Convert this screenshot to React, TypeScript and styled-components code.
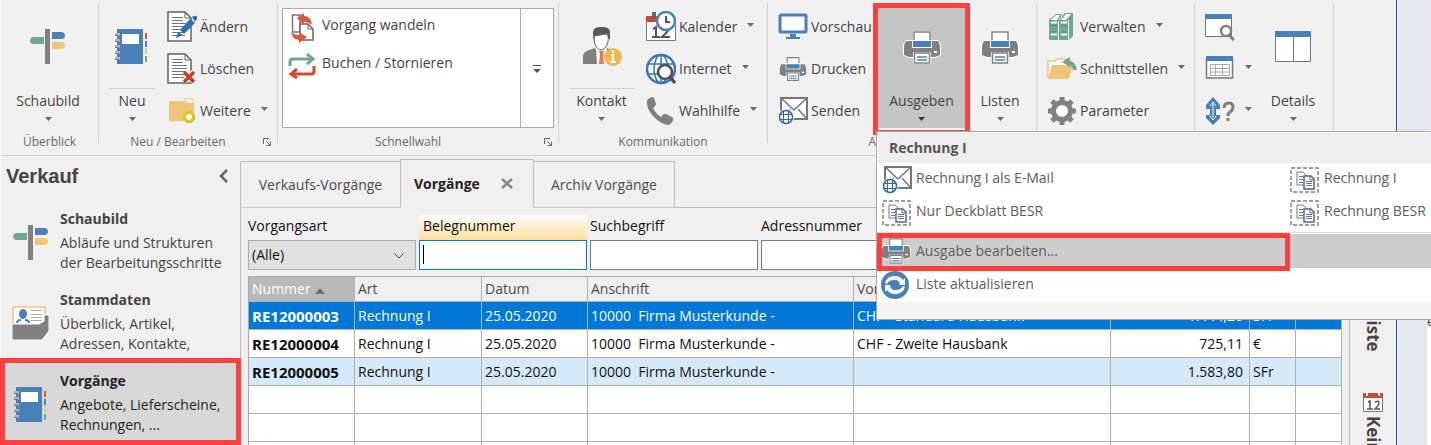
import React from 'react';
import styled, { createGlobalStyle } from 'styled-components';

const red = '#ff4040';
const blue = '#4a80b8';
const grey = '#808080';
const green = '#72a694';
const yellow = '#efc679';

const GlobalStyle = createGlobalStyle`
  * { box-sizing: border-box; }
  body {
    margin: 0;
    overflow: hidden;
    background: #f0f0f0;
    color: #444;
    font: 14px/20px "Open Sans", "Noto Sans", sans-serif;
  }
  button, input, select { font: inherit; color: inherit; }
  button { border: 0; padding: 0; background: none; text-align: left; }
  svg { display: block; flex: none; }
`;

/* ---------- icons ---------- */

type IconProps = { w: number; h: number; children: React.ReactNode };
const Icon = ({ w, h, children }: IconProps) => (
  <svg width={w} height={h} viewBox={`0 0 ${w} ${h}`} fill="none" aria-hidden="true">
    {children}
  </svg>
);

const SignIcon = () => (
  <Icon w={36} h={36}>
    <path d="M15 0h5v35h-5z" fill={grey} />
    <path d="M14 8H4q-4 0-4 3.500T4 15h10z" fill={green} />
    <path d="M22 3h9q4 0 4 3.500T31 10h-9z" fill={blue} />
    <path d="M22 13h9q4 0 4 3.500T31 20h-9z" fill={yellow} />
  </Icon>
);

const NotebookIcon = () => (
  <Icon w={34} h={36}>
    <path d="M2 0h26v35H2z" fill={blue} />
    <path d="M7 5h17v10H7z" fill="#fff" />
    <path d="M0 4h5v3H0zM0 10h5v3H0zM0 16h5v3H0zM0 22h5v3H0zM0 28h5v3H0z" fill="#aeb6bd" />
    <path d="M0 6h4v1H0zM0 12h4v1H0zM0 18h4v1H0zM0 24h4v1H0zM0 30h4v1H0z" fill="#777" />
    <path d="M30 4h2v6h-2z" fill="#d9593b" />
    <path d="M30 12h2v6h-2z" fill={blue} />
    <path d="M30 19h2v6h-2z" fill={yellow} />
    <path d="M30 27h2v6h-2z" fill={green} />
  </Icon>
);

const DocBase = () => (
  <>
    <path d="M1 1h17l6 6v23H1z" fill="#fff" stroke="#606060" strokeWidth="1.500" />
    <path d="M18 1v6h6" stroke="#606060" />
    <path d="M5 6.500h11M5 9.500h11M5 12.500h15M5 15.500h15M5 18.500h15M5 21.500h13M5 24.500h13" stroke="#777" />
  </>
);

const EditIcon = () => (
  <Icon w={30} h={32}>
    <DocBase />
    <path d="M13 19 23 8l5 4-11 11zM25 6l2-1q2-1 3 1t-1 3l-1 2zM11 21l5 3-7 3z" fill="#2f6db3" />
  </Icon>
);

const DeleteIcon = () => (
  <Icon w={30} h={32}>
    <DocBase />
    <path d="m18 19 9 9m0-9-9 9" stroke="#fff" strokeWidth="6" />
    <path d="m17 19 10 10m0-10L17 29" stroke="#cb3d23" strokeWidth="3.500" />
  </Icon>
);

const FolderPlusIcon = () => (
  <Icon w={30} h={28}>
    <path d="M18 4V2h8v6z" fill="#fff" stroke={yellow} />
    <path d="M2 4h14l3 2h8v18H2z" fill={yellow} />
    <circle cx="22" cy="20" r="6" fill="#d6c91f" />
    <path d="M22 14v12M16 20h12" stroke="#d6c91f" strokeWidth="6" />
    <path d="M22 17v6M19 20h6" stroke="#fff" strokeWidth="3" />
  </Icon>
);

const ConvertIcon = () => (
  <Icon w={28} h={30}>
    <path d="M4.500 2v17H12V2z" fill="#fff" stroke="#777" strokeWidth="1.500" />
    <path d="M12 11h8l5 5v11H12z" fill="#fff" stroke="#666" strokeWidth="1.500" />
    <path d="M20 11v5h5" stroke="#666" />
    <path d="m9 5 7-5v3q7 0 8 9-3-3-8-3v3z" fill="#d9593b" />
    <path d="m19 24-8 6v-3q-7-1-8-8 3 3 8 3v-3z" fill="#d9593b" />
  </Icon>
);

const SwapIcon = () => (
  <Icon w={28} h={26}>
    <path d="M2 13V9q0-3 3-3h20" stroke={green} strokeWidth="3" />
    <path d="m19 1 6 5-6 5" stroke={green} strokeWidth="3" />
    <path d="M26 13v5q0 3-3 3H4" stroke="#d4482d" strokeWidth="3" />
    <path d="m9 16-6 5 6 4" stroke="#d4482d" strokeWidth="3" />
  </Icon>
);

const ContactIcon = () => (
  <Icon w={40} h={42}>
    <path d="M11 6q0-5 8-5 10-1 9 7v5H11z" fill="#585858" />
    <path d="M12 10q7-1 12-2 3 0 2 8-1 6-6 8-5 0-7-6-1-4-1-8z" fill="#fff" stroke="#666" />
    <path d="M1 38v-8q0-4 6-6l6-2 6 9 6-9 8 4v12z" fill={grey} />
    <path d="m14 22 5 4 5-4 2 4v12H15z" fill="#fff" />
    <path d="M17 25h5l-1 3 1 10h-5l1-10z" fill="#e9784d" />
    <circle cx="31" cy="31" r="9" fill="#f1b84f" />
    <path d="M31 24v3M29 29h2v7m-3 0h6" stroke="#fff" strokeWidth="2" />
  </Icon>
);

const CalendarClockIcon = () => (
  <Icon w={30} h={32}>
    <path d="M1 10h28v19H1z" fill="#fff" />
    <path d="M.5 10v19.500h29V14" stroke="#777" />
    <path d="M0 5h16v6H0z" fill="#cb4a30" />
    <path d="M6 1h4v6H6z" fill="#666" />
    <path d="m7 18 3-2v10m-4 0h8M16 18q2-3 5-1 2 3-1 5l-4 4h8" stroke="#555" strokeWidth="2" />
    <circle cx="20" cy="10" r="9" fill="#fff" stroke={blue} strokeWidth="2.500" />
    <path d="M20 5v6h4" stroke="#555" strokeWidth="2" />
  </Icon>
);

const InternetIcon = () => (
  <Icon w={30} h={32}>
    <circle cx="15" cy="16" r="14" stroke="#3a76b4" strokeWidth="2.500" fill="#f8fafc" />
    <ellipse cx="15" cy="16" rx="7" ry="14" stroke="#3a76b4" strokeWidth="1.500" />
    <path d="M15 2v28M2 11h26M2 21h26" stroke="#3a76b4" strokeWidth="1.500" />
    <circle cx="19" cy="19" r="7" fill="#f4f6f8" stroke="#505050" strokeWidth="2.500" />
    <path d="m24 24 5 6" stroke="#505050" strokeWidth="3.500" />
  </Icon>
);

const PhoneIcon = () => (
  <Icon w={30} h={30}>
    <path
      d="M1 5q0-2 3-3 3-2 4 0l2 6q0 2-3 4 3 6 8 9 3-4 5-3l6 3q2 1 1 3-1 4-5 5Q14 28 6 19 0 11 1 5z"
      fill={grey}
    />
  </Icon>
);

const MonitorIcon = () => (
  <Icon w={30} h={28}>
    <rect x="2" y="2" width="26" height="17" rx="1" fill="#fff" stroke={blue} strokeWidth="3" />
    <path d="M12 21h6v3h4v2H8v-2h4z" fill={blue} />
  </Icon>
);

const PrinterIcon = ({ w = 28, h = 26 }: { w?: number; h?: number }) => (
  <svg width={w} height={h} viewBox="0 0 38 33" fill="none" aria-hidden="true">
    <path d="M10 0h18v9h7l3 4v11l-5 3h-5v6H10v-6H5l-5-3V13l3-4h7z" fill="#fff" />
    <path d="M11 9V1h16v8" fill="#fff" stroke={grey} strokeWidth="1.500" />
    <path d="M3 10h32q2 3 2 6v8l-5 2H6l-5-2v-8q0-3 2-6z" fill={grey} />
    <path d="M9 9h20v8H9z" fill="#fff" />
    <path d="M10 10h18v6H10z" fill={blue} />
    <path d="M10 21h18v12H10z" fill="#fff" />
    <path d="M11.500 22h15v10h-15z" fill="#fff" stroke={grey} strokeWidth="1.500" />
    <path d="M14 26h10M14 29h10" stroke={blue} strokeWidth="1.500" />
    <path d="M31 20h3v2h-3z" fill="#fff" />
  </svg>
);

const MailGlobeIcon = () => (
  <Icon w={30} h={28}>
    <path d="M3 1h26v21H3z" fill="#fff" stroke="#777" strokeWidth="2" />
    <path d="m3 1 13 12L29 1M4 21l8-9m8 0 8 9" stroke="#777" strokeWidth="1.500" />
    <circle cx="8" cy="20" r="8" fill="#f4f6f8" />
    <circle cx="8" cy="20" r="6.500" fill="#fff" stroke="#2e67a3" strokeWidth="1.500" />
    <path d="M5.500 14v12M10.500 14v12M2 17.500h12M2 22.500h12" stroke="#2e67a3" />
  </Icon>
);

const BooksIcon = () => (
  <Icon w={30} h={30}>
    <path d="M2 8 9 2h6l-1 3 4-4h8v23l-4 4H3l-1-1z" fill={green} />
    <path d="M4 8 9 3h4l-3 5zM14 8l5-6h5l-5 6z" fill="#fff" />
    <path d="M11.500 9v19M21.500 8v20M12 8l3-4" stroke="#f0f5f3" />
    <path d="M4 10.500h6M4 22.500h6M14 10.500h6M14 22.500h6" stroke="#fff" strokeWidth="2" />
    <path d="M4 13.500h6M14 13.500h6M5 20h4M15 20h4" stroke="#4f8572" />
  </Icon>
);

const FolderArrowIcon = () => (
  <Icon w={30} h={26}>
    <path d="M1 22V5h7l2-2h9v4h5v5" fill="#fff" stroke={yellow} strokeWidth="1.500" />
    <path d="M5 9h21l-4 14H1z" fill={yellow} />
    <path d="M28 14q-1-7-8-8" stroke={green} strokeWidth="4" />
    <path d="m15 6 8-5v10z" fill={green} />
  </Icon>
);

const GearIcon = () => (
  <Icon w={30} h={30}>
    <circle cx="15" cy="15" r="8.500" stroke={grey} strokeWidth="5" fill="#fff" />
    <g stroke={grey} strokeWidth="5">
      <path d="M15 1v4M15 25v4M1 15h4M25 15h4" />
      <path d="m5 5 3 3M22 22l3 3M25 5l-3 3M8 22l-3 3" />
    </g>
  </Icon>
);

const WindowSearchIcon = () => (
  <Icon w={30} h={28}>
    <path d="M.5 3v20.500h26V3" fill="#fff" stroke="#777" />
    <path d="M0 1h27v5H0z" fill={blue} />
    <circle cx="21" cy="18" r="5" fill="#fff" stroke={grey} strokeWidth="2.500" />
    <path d="m24 22 5 5" stroke={grey} strokeWidth="3" />
  </Icon>
);

const WindowGridIcon = () => (
  <Icon w={30} h={28}>
    <path d="M1.500 3v20h26V3" fill="#fff" stroke="#777" strokeWidth="1.500" />
    <path d="M1 1h27v5H1z" fill={blue} />
    <path d="M5.500 9.500h19v11h-19zM5 13.500h19M5 17h19M10.500 9v12M17.500 9v12" stroke="#aaa" />
  </Icon>
);

const SortHelpIcon = () => (
  <Icon w={30} h={30}>
    <path d="m8 1 7 8v4h-4v6h4v3l-7 7-7-7v-3h4v-6H1V9z" fill={blue} />
    <path d="M8 8v13M5 10l3-4 3 4M5 20l3 4 3-4" stroke="#fff" />
    <path d="M19 12q0-5 5-5 4 0 4 4 0 3-3 5-2 1-2 4M23 22v3" stroke={grey} strokeWidth="3" />
  </Icon>
);

const DetailsIcon = () => (
  <Icon w={36} h={32}>
    <path d="M.500 3v27.500h35V3M18.500 5v25" fill="#fff" stroke="#777" />
    <path d="M0 0h36v6H0z" fill={blue} />
  </Icon>
);

const CardsIcon = () => (
  <Icon w={40} h={36}>
    <path d="M2 18V1h32v18" fill="#fff" stroke={yellow} strokeWidth="1.500" />
    <ellipse cx="12" cy="8" rx="4" ry="5" fill={blue} />
    <path d="M6 17q0-3 4-3M18 17q0-3-4-3" stroke={blue} strokeWidth="2" />
    <path d="M20 4.500h11M20 8.500h11M20 11.500h11M20 14.500h11" stroke="#aaa" />
    <path d="M1 18h27l5-3V9h5v16l-7 9H1z" fill={grey} stroke="#fff" />
  </Icon>
);

const CopyDocsIcon = () => (
  <Icon w={30} h={26}>
    <path d="M1 1h27v24H1z" stroke="#808080" strokeWidth="1.500" strokeDasharray="4 2" fill="#fff" />
    <path d="M7 5h6l3 3v10H7z" fill="#fff" stroke="#777" />
    <path d="M9 9.500h4M9 12.500h4M9 15.500h4" stroke={blue} />
    <path d="M14 9h7l3 3v10H14z" fill="#fff" stroke="#666" strokeWidth="1.500" />
    <path d="M20 9v4h4" stroke="#666" />
    <path d="M16 14.500h6M16 16.500h6M16 18.500h6" stroke={blue} />
  </Icon>
);

const RefreshIcon = () => (
  <Icon w={28} h={28}>
    <circle cx="14" cy="14" r="14" fill={blue} />
    <path d="M4 12q2-7 10-7 5 0 8 4l2-2v7h-7l2-2q-2-3-6-3-5 0-7 4z" fill="#fff" />
    <path d="M24 16q-2 7-10 7-5 0-8-4l-2 2v-7h7l-2 2q2 3 6 3 5 0 7-4z" fill="#fff" />
    <path d="M9 15q0-4 5-5l1-2 3 4-4 3z" fill={blue} />
    <path d="M19 13q0 4-5 5l-1 2-3-4 4-3z" fill={blue} />
  </Icon>
);

const SmallCalendarIcon = () => (
  <Icon w={20} h={20}>
    <path d="M.500 5v14.500h19V5" fill="#fff" stroke="#777" />
    <path d="M0 1h20v5H0z" fill="#cb4a30" />
    <path d="M4 0v4M16 0v4" stroke="#fff" strokeWidth="2" />
    <path d="m5 10 2-1v8m-3 0h6M12 10q4-2 4 1 0 2-4 6h5" stroke="#555" strokeWidth="1.500" />
  </Icon>
);

const CaretDown = ({ dark }: { dark?: boolean }) => (
  <Icon w={7} h={4}>
    <path d="M0 0h7L3.500 4z" fill={dark ? '#333' : '#6a6a6a'} />
  </Icon>
);

/* ---------- shell ---------- */

const Screen = styled.div`
  display: flex;
  height: 100vh;
  overflow: hidden;
`;

const AppWindow = styled.div`
  flex: 1;
  min-width: 0;
  display: flex;
  flex-direction: column;
  border-left: 1px solid #fafafa;
  border-right: 1px solid #2b579a;
`;

const Backdrop = styled.div`
  width: 34px;
  flex: none;
  display: flex;
  flex-direction: column;
  background: #e6eaee;
`;

const BackdropTop = styled.div`
  height: 130px;
  border-bottom: 1px solid #d4dbe2;
`;

const BackdropEdge = styled.div`
  flex: 1;
  width: 4px;
  margin-left: 30px;
  padding-top: 182px;
  background: #fff;
  color: #333;
  font-size: 12px;
`;

/* ---------- ribbon ---------- */

const Ribbon = styled.header`
  display: flex;
  flex: none;
  height: 156px;
  background: #f1f1f1;
  border-bottom: 1px solid #cfcfcf;
`;

const Group = styled.section<{ $width: number }>`
  width: ${(p) => p.$width}px;
  flex: none;
  display: flex;
  flex-direction: column;
`;

const GroupBody = styled.div<{ $inset?: number }>`
  display: flex;
  height: 132px;
  padding: 6px 0 0 ${(p) => p.$inset ?? 10}px;
`;

const GroupFooter = styled.div`
  display: flex;
  align-items: center;
  height: 20px;
  color: #6a6a6a;
  font-size: 12px;
  white-space: nowrap;
`;

const FooterLabel = styled.span`
  flex: 1;
  text-align: center;
`;

const Launcher = styled.button`
  width: 20px;
  padding-left: 6px;
`;

const Divider = styled.div`
  width: 1px;
  flex: none;
  height: 140px;
  margin-top: 3px;
  background: #d2d2d2;
`;

const BigButton = styled.button<{ $width: number; $active?: boolean }>`
  width: ${(p) => p.$width}px;
  height: 122px;
  flex: none;
  display: flex;
  flex-direction: column;
  align-items: center;
  background: ${(p) => (p.$active ? '#c5c5c5' : 'transparent')};
`;

const BigIcon = styled.span<{ $split?: boolean }>`
  display: flex;
  align-items: center;
  justify-content: center;
  align-self: stretch;
  height: 83px;
  margin-bottom: 2px;
  border-bottom: 1px solid ${(p) => (p.$split ? '#cfcfcf' : 'transparent')};
`;

const BigLabel = styled.span`
  margin-bottom: 6px;
`;

const Column = styled.div<{ $width?: number; $gap?: number }>`
  display: flex;
  flex-direction: column;
  width: ${(p) => (p.$width ? `${p.$width}px` : 'auto')};
  margin-left: ${(p) => p.$gap ?? 0}px;
`;

const RowButton = styled.button`
  display: flex;
  align-items: center;
  gap: 3px;
  height: 42px;
  white-space: nowrap;
  & > span { width: 30px; display: flex; justify-content: center; }
  & > svg { margin: 0 0 4px 7px; }
`;

const Gallery = styled.div`
  display: flex;
  width: 272px;
  height: 120px;
  margin-top: 2px;
  background: #fff;
  border: 1px solid #ababab;
`;

const GalleryList = styled.div`
  flex: 1;
  padding-left: 5px;
`;

const GalleryItem = styled.button`
  display: flex;
  align-items: center;
  gap: 6px;
  height: 38px;
  & > span { padding-bottom: 6px; }
`;

const GalleryMore = styled.button`
  width: 33px;
  display: flex;
  justify-content: center;
  padding-top: 56px;
  border-left: 1px solid #ababab;
`;

const Anchor = styled.div`
  position: relative;
`;

const RedFrame = styled.div<{ $inset: string; $fill?: string; $above?: boolean }>`
  position: absolute;
  z-index: ${(p) => (p.$above ? 1 : 'auto')};
  inset: ${(p) => p.$inset};
  border: 5px solid ${red};
  background: ${(p) => p.$fill ?? 'transparent'};
  pointer-events: none;
`;

/* ---------- output menu ---------- */

const Menu = styled.div`
  position: absolute;
  z-index: 5;
  top: 125px;
  left: 0;
  width: 560px;
  background: #fff;
  border: 1px solid #a6a6a6;
  color: #5c5c5c;
`;

const MenuTitle = styled.h2`
  margin: 1px 1px 0;
  padding: 4px 11px;
  height: 30px;
  background: #eee;
  font-size: 14px;
  line-height: 22px;
  color: #555;
`;

const MenuGrid = styled.div`
  display: grid;
  grid-template-columns: 408px 1fr;
  padding: 0 0 3px 5px;
  border-bottom: 1px solid #ddd;
`;

const MenuItem = styled.button`
  display: flex;
  align-items: center;
  gap: 4px;
  height: 33px;
  white-space: nowrap;
  & > i { width: 30px; }
  & > span { padding-bottom: 3px; }
`;

const MenuRow = styled(MenuItem)<{ $hover?: boolean }>`
  position: relative;
  width: 100%;
  height: 34px;
  margin-top: ${(p) => (p.$hover ? 1 : 0)}px;
  padding-left: 4px;
  gap: 5px;
  background: ${(p) => (p.$hover ? '#cdcdcd' : 'transparent')};
  & > span { padding-bottom: ${(p) => (p.$hover ? 1 : 2)}px; }
`;

const MenuFooter = styled.div`
  height: 17px;
  background: #f5f5f5;
`;

/* ---------- navigation ---------- */

const Body = styled.div`
  flex: 1;
  min-height: 0;
  display: flex;
`;

const Nav = styled.nav`
  width: 239px;
  flex: none;
  background: #f0f0f0;
`;

const NavHeader = styled.div`
  display: flex;
  justify-content: space-between;
  align-items: center;
  height: 47px;
  padding: 0 11px 8px 5px;
`;

const NavTitle = styled.h1`
  margin: 0;
  font: bold 20px/24px "Liberation Sans", Arial, sans-serif;
`;

const NavItem = styled.a<{ $selected?: boolean }>`
  position: relative;
  display: flex;
  height: 81px;
  padding-top: 6px;
  color: ${(p) => (p.$selected ? '#222' : '#444')};
  text-decoration: none;
  white-space: nowrap;
`;

const NavIcon = styled.span`
  position: relative;
  display: flex;
  justify-content: center;
  width: 59px;
  padding-top: 16px;
`;

const NavText = styled.span`
  position: relative;
  display: block;
  & strong { display: block; margin-bottom: 4px; }
`;

/* ---------- content ---------- */

const Content = styled.main`
  flex: 1;
  min-width: 0;
  display: flex;
  flex-direction: column;
`;

const TabBar = styled.div`
  display: flex;
  align-items: flex-end;
  height: 52px;
  flex: none;
`;

const Tab = styled.button<{ $width: number; $active?: boolean }>`
  display: flex;
  align-items: center;
  justify-content: ${(p) => (p.$active ? 'space-between' : 'center')};
  width: ${(p) => p.$width}px;
  height: ${(p) => (p.$active ? 49 : 47)}px;
  padding: 0 ${(p) => (p.$active ? 20 : 0)}px 0 ${(p) => (p.$active ? 13 : 0)}px;
  border: 1px solid #bdbdbd;
  border-right-width: ${(p) => (p.$active ? 1 : 0)}px;
  border-bottom-color: ${(p) => (p.$active ? 'transparent' : '#c8c8c8')};
  color: ${(p) => (p.$active ? '#222' : '#4c4c4c')};
  font-weight: ${(p) => (p.$active ? 700 : 400)};
  & + & + & { border-left-width: 0; border-right-width: 1px; }
`;

const TabFill = styled.div`
  flex: 1;
  height: 1px;
  background: #bdbdbd;
`;

const Sheet = styled.div`
  flex: 1;
  min-height: 0;
  padding: 7px 7px 0;
  border-left: 1px solid #bdbdbd;
`;

const Filters = styled.form`
  display: flex;
  gap: 3px;
  margin-bottom: 6px;
`;

const Field = styled.label<{ $focus?: boolean }>`
  position: relative;
  width: 168px;
  flex: none;
  color: #111;
  background: ${(p) => (p.$focus ? 'linear-gradient(#fffdf8, #fddf9f 25px)' : 'none')};
  ${(p) => p.$focus && `
    &::after {
      content: '';
      position: absolute;
      left: 4px;
      bottom: 6px;
      width: 1px;
      height: 19px;
      background: #000;
    }
  `}
`;

const FieldLabel = styled.span<{ $focus?: boolean }>`
  display: block;
  height: 25px;
  padding: 1px 0 0 ${(p) => (p.$focus ? 4 : 0)}px;
`;

const TextBox = styled.input<{ $focus?: boolean }>`
  display: block;
  width: 100%;
  height: 30px;
  padding: 0 4px;
  border: 1px solid ${(p) => (p.$focus ? '#0078d7' : '#7a7a7a')};
  border-radius: 0;
  background: #fff;
  outline: none;
`;

const DropDown = styled.select`
  display: block;
  width: 100%;
  height: 30px;
  padding: 0 3px;
  appearance: none;
  border: 1px solid #adadad;
  border-radius: 0;
  background: #e1e1e1;
`;

const DropArrow = styled.span`
  position: absolute;
  right: 12px;
  bottom: 11px;
  pointer-events: none;
`;

const Table = styled.table`
  width: 100%;
  table-layout: fixed;
  border-collapse: separate;
  border-spacing: 0;
  border: solid #a9a9a9;
  border-width: 1px 0 0 1px;
  background: #fff;
  color: #111;
`;

const Th = styled.th<{ $sorted?: boolean }>`
  height: 25px;
  padding: 0 3px;
  border: solid #b0b0b0;
  border-width: 0 1px 1px 0;
  background: ${(p) => (p.$sorted ? '#b9b9b9' : '#f0f0f0')};
  color: ${(p) => (p.$sorted ? '#fff' : '#4c4c4c')};
  font-weight: 400;
  text-align: left;
  & svg { display: inline-block; margin-left: 4px; }
`;

const Tr = styled.tr<{ $tone?: 'selected' | 'tint' }>`
  background: ${(p) => (p.$tone === 'selected' ? '#0078d7' : p.$tone === 'tint' ? '#d6e9f8' : '#fff')};
  color: ${(p) => (p.$tone === 'selected' ? '#fff' : '#111')};
`;

const Td = styled.td<{ $strong?: boolean; $right?: boolean }>`
  height: 28px;
  padding: 0 ${(p) => (p.$right ? 6 : 3)}px 0 3px;
  border: solid #b0b0b0;
  border-width: 0 1px 1px 0;
  font-size: ${(p) => (p.$strong ? 15 : 14)}px;
  font-weight: ${(p) => (p.$strong ? 700 : 400)};
  text-align: ${(p) => (p.$right ? 'right' : 'left')};
  white-space: pre;
`;

const SideTabs = styled.aside`
  width: 47px;
  flex: none;
  display: flex;
  flex-direction: column;
  align-items: center;
  border-left: 1px solid #bdbdbd;
  background: #f0f0f0;
`;

const SideTab = styled.button<{ $tall?: boolean }>`
  display: flex;
  flex-direction: column;
  align-items: center;
  justify-content: ${(p) => (p.$tall ? 'flex-end' : 'flex-start')};
  flex: none;
  gap: 4px;
  height: ${(p) => (p.$tall ? 196 : 200)}px;
  margin-bottom: 40px;
  font-size: 17px;
  font-weight: 700;
  & > span { writing-mode: vertical-rl; white-space: nowrap; }
`;

/* ---------- composed parts ---------- */

type BigProps = { icon: React.ReactNode; label: string; width: number; active?: boolean; split?: boolean };
const Big = ({ icon, label, width, active, split }: BigProps) => (
  <BigButton $width={width} $active={active}>
    <BigIcon $split={split}>{icon}</BigIcon>
    <BigLabel>{label}</BigLabel>
    <CaretDown dark={active} />
  </BigButton>
);

type RowProps = { icon: React.ReactNode; label?: string; caret?: boolean };
const Row = ({ icon, label, caret }: RowProps) => (
  <RowButton>
    <span>{icon}</span>
    {label}
    {caret && <CaretDown />}
  </RowButton>
);

const Footer = ({ label, launcher }: { label: string; launcher?: boolean }) => (
  <GroupFooter>
    <FooterLabel>{label}</FooterLabel>
    {launcher && (
      <Launcher aria-label={`${label} Optionen`}>
        <Icon w={8} h={8}>
          <path d="M.5 6V.5H6M3 3l4 4M7.500 3.500v4h-4" stroke="#666" />
        </Icon>
      </Launcher>
    )}
  </GroupFooter>
);

const navItems = [
  { title: 'Schaubild', lines: ['Abläufe und Strukturen', 'der Bearbeitungsschritte'], icon: <SignIcon /> },
  { title: 'Stammdaten', lines: ['Überblick, Artikel,', 'Adressen, Kontakte,'], icon: <CardsIcon /> },
  { title: 'Vorgänge', lines: ['Angebote, Lieferscheine,', 'Rechnungen, ...'], icon: <NotebookIcon />, selected: true },
];

const rows: { tone?: 'selected' | 'tint'; cells: string[] }[] = [
  { tone: 'selected', cells: ['RE12000003', 'Rechnung I', '25.05.2020', '10000  Firma Musterkunde -', 'CHF - Standard Hausbank', '1.444,20', 'SFr', ''] },
  { cells: ['RE12000004', 'Rechnung I', '25.05.2020', '10000  Firma Musterkunde -', 'CHF - Zweite Hausbank', '725,11', '€', ''] },
  { tone: 'tint', cells: ['RE12000005', 'Rechnung I', '25.05.2020', '10000  Firma Musterkunde -', '', '1.583,80', 'SFr', ''] },
  { cells: Array(8).fill('') },
  { cells: Array(8).fill('') },
  { cells: Array(8).fill('') },
];

const headings = ['Nummer', 'Art', 'Datum', 'Anschrift', 'Vorgang', 'Betrag', '', ''];
const widths = [106, 127, 106, undefined, 257, 139, 46, 46];

export default function App() {
  return (
    <Screen>
      <GlobalStyle />
      <AppWindow>
        <Ribbon>
          <Group $width={97}>
            <GroupBody $inset={7}>
              <Big icon={<SignIcon />} label="Schaubild" width={80} />
            </GroupBody>
            <Footer label="Überblick" />
          </Group>
          <Divider />
          <Group $width={178}>
            <GroupBody>
              <Big icon={<NotebookIcon />} label="Neu" width={46} split />
              <Column $gap={12}>
                <Row icon={<EditIcon />} label="Ändern" />
                <Row icon={<DeleteIcon />} label="Löschen" />
                <Row icon={<FolderPlusIcon />} label="Weitere" caret />
              </Column>
            </GroupBody>
            <Footer label="Neu / Bearbeiten" launcher />
          </Group>
          <Divider />
          <Group $width={280}>
            <GroupBody $inset={4}>
              <Gallery>
                <GalleryList>
                  <GalleryItem><ConvertIcon /><span>Vorgang wandeln</span></GalleryItem>
                  <GalleryItem><SwapIcon /><span>Buchen / Stornieren</span></GalleryItem>
                </GalleryList>
                <GalleryMore aria-label="Weitere Einträge">
                  <Icon w={8} h={9}>
                    <path d="M0 .5h8" stroke="#555" />
                    <path d="M0 4h8L4 8z" fill="#555" />
                  </Icon>
                </GalleryMore>
              </Gallery>
            </GroupBody>
            <Footer label="Schnellwahl" launcher />
          </Group>
          <Divider />
          <Group $width={208}>
            <GroupBody>
              <Big icon={<ContactIcon />} label="Kontakt" width={65} split />
              <Column $gap={12}>
                <Row icon={<CalendarClockIcon />} label="Kalender" caret />
                <Row icon={<InternetIcon />} label="Internet" caret />
                <Row icon={<PhoneIcon />} label="Wahlhilfe" caret />
              </Column>
            </GroupBody>
            <Footer label="Kommunikation" />
          </Group>
          <Divider />
          <Group $width={268}>
            <GroupBody>
              <Column $width={98}>
                <Row icon={<MonitorIcon />} label="Vorschau" />
                <Row icon={<PrinterIcon />} label="Drucken" />
                <Row icon={<MailGlobeIcon />} label="Senden" />
              </Column>
              <Anchor>
                <Big icon={<PrinterIcon w={38} h={33} />} label="Ausgeben" width={91} active />
                <RedFrame $inset="-3px -3px -3px -3px" />
                <Menu>
                  <MenuTitle>Rechnung I</MenuTitle>
                  <MenuGrid>
                    <MenuItem><MailGlobeIcon /><span>Rechnung I als E-Mail</span></MenuItem>
                    <MenuItem><CopyDocsIcon /><span>Rechnung I</span></MenuItem>
                    <MenuItem><CopyDocsIcon /><span>Nur Deckblatt BESR</span></MenuItem>
                    <MenuItem><CopyDocsIcon /><span>Rechnung BESR</span></MenuItem>
                  </MenuGrid>
                  <MenuRow $hover>
                    <PrinterIcon w={30} />
                    <span>Ausgabe bearbeiten...</span>
                    <RedFrame $inset="-1px 145px -3px 0" $above />
                  </MenuRow>
                  <MenuRow><i><RefreshIcon /></i><span>Liste aktualisieren</span></MenuRow>
                  <MenuFooter />
                </Menu>
              </Anchor>
              <Big icon={<PrinterIcon w={38} h={33} />} label="Listen" width={66} />
            </GroupBody>
            <Footer label="Auswertung" />
          </Group>
          <Divider />
          <Group $width={157}>
            <GroupBody>
              <Column>
                <Row icon={<BooksIcon />} label="Verwalten" caret />
                <Row icon={<FolderArrowIcon />} label="Schnittstellen" caret />
                <Row icon={<GearIcon />} label="Parameter" />
              </Column>
            </GroupBody>
          </Group>
          <Divider />
          <Group $width={138}>
            <GroupBody>
              <Column $width={63}>
                <Row icon={<WindowSearchIcon />} />
                <Row icon={<WindowGridIcon />} caret />
                <Row icon={<SortHelpIcon />} caret />
              </Column>
              <Big icon={<DetailsIcon />} label="Details" width={50} />
            </GroupBody>
          </Group>
          <Divider />
        </Ribbon>
        <Body>
          <Nav>
            <NavHeader>
              <NavTitle>Verkauf</NavTitle>
              <button aria-label="Einklappen">
                <Icon w={12} h={14}>
                  <path d="M10 1 4 7l6 6" stroke="#666" strokeWidth="2.500" />
                </Icon>
              </button>
            </NavHeader>
            {navItems.map((item) => (
              <NavItem key={item.title} href="#" $selected={item.selected}>
                {item.selected && <RedFrame $inset="-7px -1px 1px -1px" $fill="#d8d8d8" />}
                <NavIcon>{item.icon}</NavIcon>
                <NavText>
                  <strong>{item.title}</strong>
                  {item.lines[0]}
                  <br />
                  {item.lines[1]}
                </NavText>
              </NavItem>
            ))}
          </Nav>
          <Content>
            <TabBar>
              <Tab $width={160}>Verkaufs-Vorgänge</Tab>
              <Tab $width={134} $active>
                Vorgänge
                <Icon w={12} h={11}>
                  <path d="m1 1 10 9m0-9L1 10" stroke="#888" strokeWidth="2.500" />
                </Icon>
              </Tab>
              <Tab $width={141}>Archiv Vorgänge</Tab>
              <TabFill />
            </TabBar>
            <Sheet>
              <Filters>
                <Field>
                  <FieldLabel>Vorgangsart</FieldLabel>
                  <DropDown><option>(Alle)</option></DropDown>
                  <DropArrow>
                    <Icon w={10} h={6}><path d="m.5.5 4.500 4.500L9.500.5" stroke="#444" /></Icon>
                  </DropArrow>
                </Field>
                <Field $focus>
                  <FieldLabel $focus>Belegnummer</FieldLabel>
                  <TextBox $focus />
                </Field>
                <Field><FieldLabel>Suchbegriff</FieldLabel><TextBox /></Field>
                <Field><FieldLabel>Adressnummer</FieldLabel><TextBox /></Field>
              </Filters>
              <Table>
                <colgroup>
                  {widths.map((w, i) => <col key={i} width={w} />)}
                </colgroup>
                <thead>
                  <tr>
                    {headings.map((h, i) => (
                      <Th key={i} $sorted={i === 0}>
                        {h}
                        {i === 0 && <Icon w={10} h={6}><path d="M5 0l5 6H0z" fill="#6e6e6e" /></Icon>}
                      </Th>
                    ))}
                  </tr>
                </thead>
                <tbody>
                  {rows.map((row, r) => (
                    <Tr key={r} $tone={row.tone}>
                      {row.cells.map((cell, c) => (
                        <Td key={c} $strong={c === 0} $right={c === 5}>{cell}</Td>
                      ))}
                    </Tr>
                  ))}
                </tbody>
              </Table>
            </Sheet>
          </Content>
          <SideTabs>
            <SideTab $tall><span>Liste</span></SideTab>
            <SideTab><SmallCalendarIcon /><span>Keine</span></SideTab>
          </SideTabs>
        </Body>
      </AppWindow>
      <Backdrop>
        <BackdropTop />
        <BackdropEdge>e</BackdropEdge>
      </Backdrop>
    </Screen>
  );
}
